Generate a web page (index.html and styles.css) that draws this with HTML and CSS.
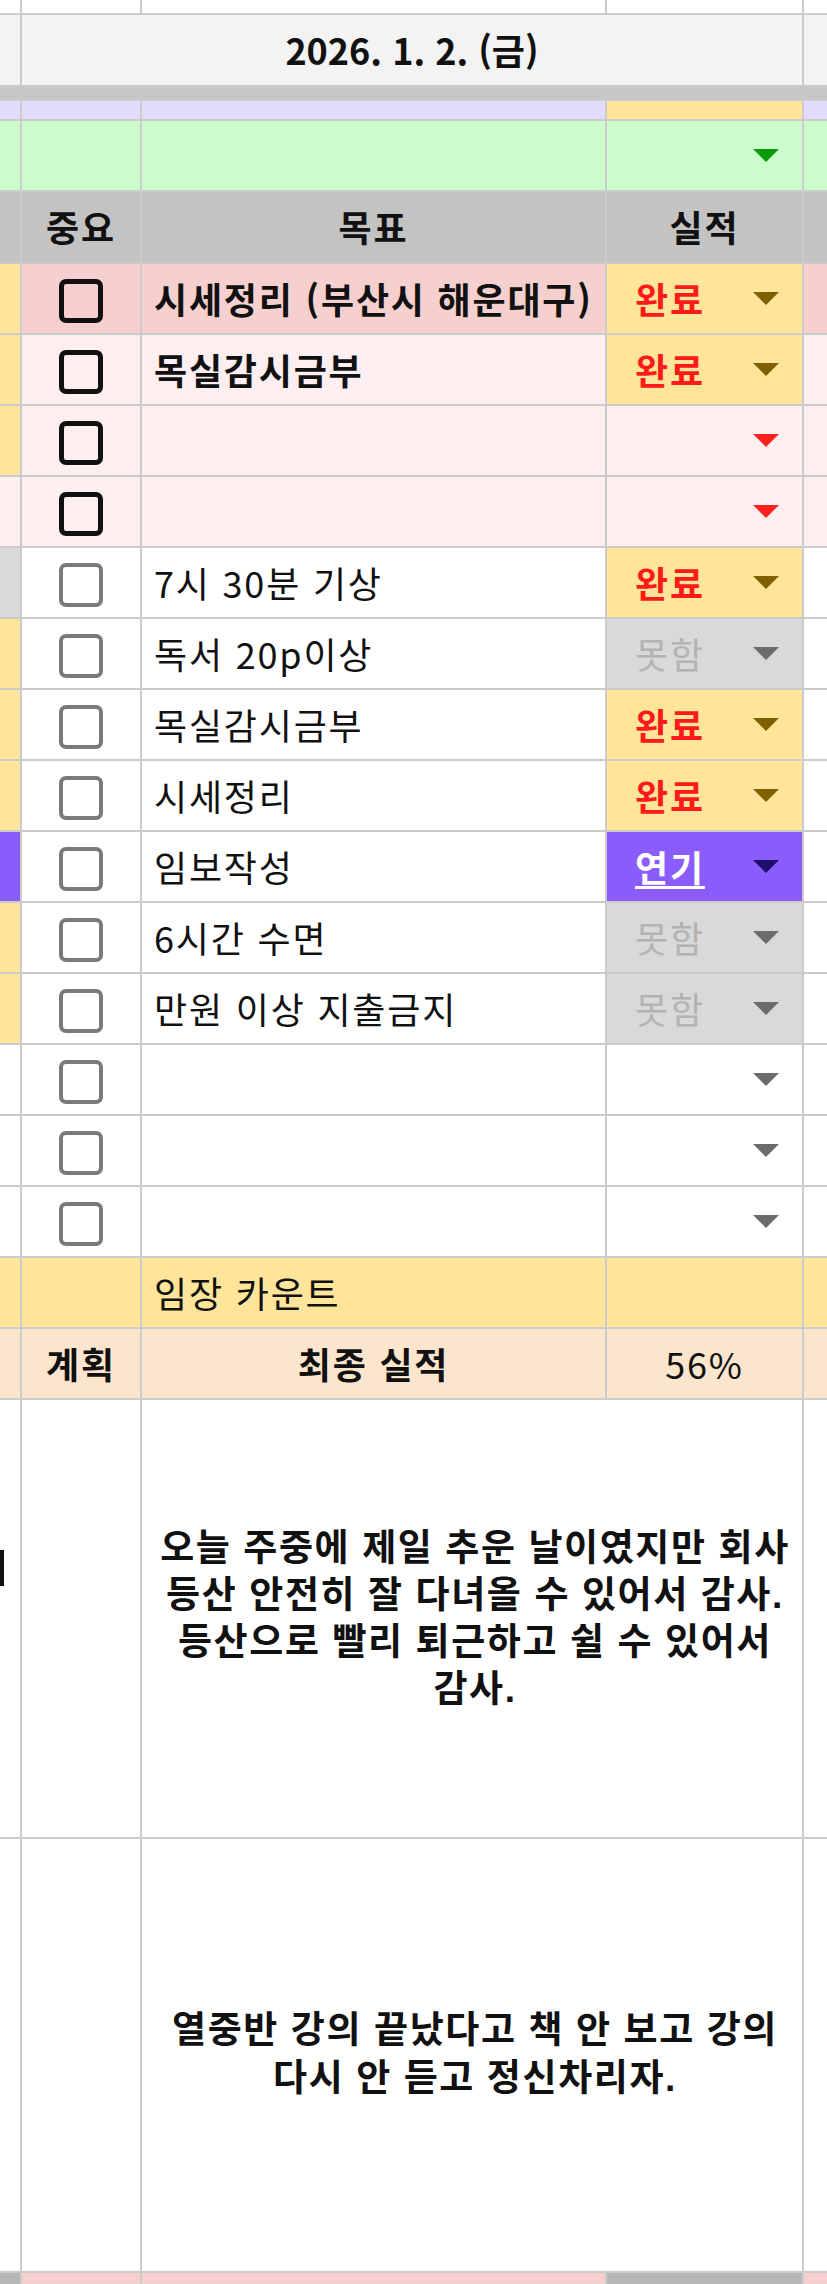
FILE: index.html
```html
<!DOCTYPE html>
<html lang="ko">
<head>
<meta charset="utf-8">
<title>2026. 1. 2. (금)</title>
<link rel="stylesheet" href="styles.css">
</head>
<body>
<div class="sheet">
  <!-- row 0 -->
  <div class="c w"></div><div class="c w"></div><div class="c w"></div><div class="c w"></div><div class="c w"></div>
  <!-- date -->
  <div class="c f3"></div>
  <div class="c f3 date span3">2026. 1. 2. (금)</div>
  <div class="c f3"></div>
  <!-- band -->
  <div class="band"></div>
  <!-- lavender -->
  <div class="c lav"></div><div class="c lav"></div><div class="c lav"></div><div class="c yel"></div><div class="c lav"></div>
  <!-- green -->
  <div class="c grn"></div><div class="c grn"></div><div class="c grn"></div>
  <div class="c grn dd"><span class="val"></span><span class="tri t-green"></span></div>
  <div class="c grn"></div>
  <!-- header -->
  <div class="c hdr"></div>
  <div class="c hdr center bold">중요</div>
  <div class="c hdr center bold">목표</div>
  <div class="c hdr center bold">실적</div>
  <div class="c hdr"></div>

  <!-- row 1 -->
  <div class="c yel"></div>
  <div class="c pk cbcell"><span class="cb cb-strong"></span></div>
  <div class="c pk goal bold">시세정리 (부산시 해운대구)</div>
  <div class="c yel dd"><span class="val done">완료</span><span class="tri t-olive"></span></div>
  <div class="c pk"></div>
  <!-- row 2 -->
  <div class="c yel"></div>
  <div class="c lpk cbcell"><span class="cb cb-strong"></span></div>
  <div class="c lpk goal bold">목실감시금부</div>
  <div class="c yel dd"><span class="val done">완료</span><span class="tri t-olive"></span></div>
  <div class="c lpk"></div>
  <!-- row 3 -->
  <div class="c yel"></div>
  <div class="c lpk cbcell"><span class="cb cb-strong"></span></div>
  <div class="c lpk goal"></div>
  <div class="c lpk dd"><span class="val"></span><span class="tri t-red"></span></div>
  <div class="c lpk"></div>
  <!-- row 4 -->
  <div class="c lpk"></div>
  <div class="c lpk cbcell"><span class="cb cb-strong"></span></div>
  <div class="c lpk goal"></div>
  <div class="c lpk dd"><span class="val"></span><span class="tri t-red"></span></div>
  <div class="c lpk"></div>
  <!-- row 5 -->
  <div class="c gry"></div>
  <div class="c w cbcell"><span class="cb"></span></div>
  <div class="c w goal">7시 30분 기상</div>
  <div class="c yel dd"><span class="val done">완료</span><span class="tri t-olive"></span></div>
  <div class="c w"></div>
  <!-- row 6 -->
  <div class="c yel"></div>
  <div class="c w cbcell"><span class="cb"></span></div>
  <div class="c w goal">독서 20p이상</div>
  <div class="c gry dd"><span class="val fail">못함</span><span class="tri t-gray"></span></div>
  <div class="c w"></div>
  <!-- row 7 -->
  <div class="c yel"></div>
  <div class="c w cbcell"><span class="cb"></span></div>
  <div class="c w goal">목실감시금부</div>
  <div class="c yel dd"><span class="val done">완료</span><span class="tri t-olive"></span></div>
  <div class="c w"></div>
  <!-- row 8 -->
  <div class="c yel"></div>
  <div class="c w cbcell"><span class="cb"></span></div>
  <div class="c w goal">시세정리</div>
  <div class="c yel dd"><span class="val done">완료</span><span class="tri t-olive"></span></div>
  <div class="c w"></div>
  <!-- row 9 -->
  <div class="c pur"></div>
  <div class="c w cbcell"><span class="cb"></span></div>
  <div class="c w goal">임보작성</div>
  <div class="c pur dd"><span class="val delay">연기</span><span class="tri t-navy"></span></div>
  <div class="c w"></div>
  <!-- row 10 -->
  <div class="c yel"></div>
  <div class="c w cbcell"><span class="cb"></span></div>
  <div class="c w goal">6시간 수면</div>
  <div class="c gry dd"><span class="val fail">못함</span><span class="tri t-gray"></span></div>
  <div class="c w"></div>
  <!-- row 11 -->
  <div class="c yel"></div>
  <div class="c w cbcell"><span class="cb"></span></div>
  <div class="c w goal">만원 이상 지출금지</div>
  <div class="c gry dd"><span class="val fail">못함</span><span class="tri t-gray"></span></div>
  <div class="c w"></div>
  <!-- row 12 -->
  <div class="c w"></div>
  <div class="c w cbcell"><span class="cb"></span></div>
  <div class="c w goal"></div>
  <div class="c w dd"><span class="val"></span><span class="tri t-gray"></span></div>
  <div class="c w"></div>
  <!-- row 13 -->
  <div class="c w"></div>
  <div class="c w cbcell"><span class="cb"></span></div>
  <div class="c w goal"></div>
  <div class="c w dd"><span class="val"></span><span class="tri t-gray"></span></div>
  <div class="c w"></div>
  <!-- row 14 -->
  <div class="c w"></div>
  <div class="c w cbcell"><span class="cb"></span></div>
  <div class="c w goal"></div>
  <div class="c w dd"><span class="val"></span><span class="tri t-gray"></span></div>
  <div class="c w"></div>
  <!-- 임장 카운트 -->
  <div class="c yel"></div>
  <div class="c yel"></div>
  <div class="c yel goal">임장 카운트</div>
  <div class="c yel"></div>
  <div class="c yel"></div>
  <!-- 최종 실적 -->
  <div class="c peach"></div>
  <div class="c peach center bold">계획</div>
  <div class="c peach center bold">최종 실적</div>
  <div class="c peach center">56%</div>
  <div class="c peach"></div>
  <!-- big 1 -->
  <div class="c w edge"><span class="overflow-mark"></span></div>
  <div class="c w"></div>
  <div class="c w note span2">오늘 주중에 제일 추운 날이였지만 회사<br>등산 안전히 잘 다녀올 수 있어서 감사.<br>등산으로 빨리 퇴근하고 쉴 수 있어서<br>감사.</div>
  <div class="c w"></div>
  <!-- big 2 -->
  <div class="c w"></div>
  <div class="c w"></div>
  <div class="c w note note2 span2">열중반 강의 끝났다고 책 안 보고 강의<br>다시 안 듣고 정신차리자.</div>
  <div class="c w"></div>
  <!-- bottom -->
  <div class="c dg"></div><div class="c pk"></div><div class="c pk"></div><div class="c dg"></div><div class="c pk"></div>
</div>
</body>
</html>
```

FILE: styles.css
```css
html, body {
  margin: 0;
  padding: 0;
  background: #ffffff;
}
body {
  width: 827px;
  height: 2284px;
  overflow: hidden;
  font-family: "Noto Sans CJK KR", "Noto Sans", "Liberation Sans", sans-serif;
  font-size: 36px;
  letter-spacing: 1.8px;
  color: #111111;
}
.sheet {
  display: grid;
  grid-template-columns: 20px 118px 463px 195px 23px;
  grid-template-rows: 13px 70px 12px 18px 69px 70px repeat(16, 69px) 437px 432px 20px;
  gap: 2px;
  background: #cbcbcb;
  width: 827px;
}
.c {
  display: flex;
  align-items: center;
  min-width: 0;
  overflow: hidden;
  white-space: nowrap;
  line-height: 1.2;
}
.span3 { grid-column: span 3; }
.span2 { grid-column: span 2; }
.band { grid-column: 1 / -1; background: #c6c6c6; }

.w { background: #ffffff; }
.f3 { background: #f3f3f3; }
.lav { background: #e2dcfd; }
.yel { background: #ffe599; }
.grn { background: #ccfccc; }
.hdr { background: #c3c3c3; }
.pk { background: #f6cfcf; }
.lpk { background: #fdefef; }
.gry { background: #d9d9d9; }
.pur { background: #8a5cfb; }
.peach { background: #fce5cd; }
.dg { background: #b7b7b7; }

.center { justify-content: center; }
.bold { font-weight: 700; }

.date {
  justify-content: center;
  font-weight: 700;
  font-size: 36px;
  letter-spacing: 0;
  color: #111111;
}

.goal { padding-left: 12px; }

.cbcell { justify-content: center; padding-top: 4px; box-sizing: border-box; }
.cb {
  width: 44px;
  height: 44px;
  box-sizing: border-box;
  border: 4px solid #7a7a7a;
  border-radius: 7px;
}
.cb-strong {
  border: 5px solid #111111;
}

.dd {
  justify-content: space-between;
  padding-left: 28px;
  padding-right: 23px;
}
.val { font-weight: 700; }
.done { color: #ff1a1a; }
.fail { color: #b3b3b3; font-weight: 400; }
.delay { color: #ffffff; text-decoration: underline; text-underline-offset: 4px; text-decoration-thickness: 3px; }

.tri {
  width: 0;
  height: 0;
  border-left: 13px solid transparent;
  border-right: 13px solid transparent;
  border-top: 13px solid #666666;
}
.t-green { border-top-color: #0a9a0a; }
.t-olive { border-top-color: #7f6000; }
.t-red { border-top-color: #ff2020; }
.t-gray { border-top-color: #6b6b6b; }
.t-navy { border-top-color: #1d0f6b; }

.note {
  justify-content: center;
  text-align: center;
  font-family: "Liberation Sans", "Noto Sans CJK KR", sans-serif;
  font-weight: 700;
  font-size: 37px;
  letter-spacing: 1.6px;
  line-height: 47px;
  white-space: normal;
  padding-left: 6px;
  box-sizing: border-box;
}
.note2 { line-height: 48px; padding-left: 6px; }

.edge {
  align-items: flex-start;
  padding-top: 150px;
  box-sizing: border-box;
}
.overflow-mark {
  display: block;
  width: 4px;
  height: 36px;
  background: #111111;
}
```
